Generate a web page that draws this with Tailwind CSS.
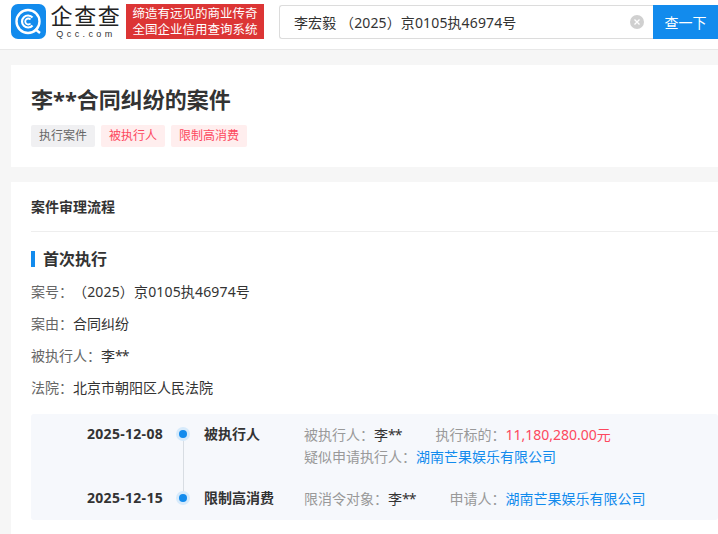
<!DOCTYPE html>
<html lang="zh"><head><meta charset="utf-8"><script src="https://cdn.jsdelivr.net/npm/@tailwindcss/browser@4"></script></head>
<body class="w-[718px] h-[534px] overflow-hidden bg-[#f6f6f6] font-['Noto_Sans','Noto_Sans_CJK_SC',sans-serif] text-[14px] text-[#333]">
<header class="h-[50px] bg-white flex items-start pt-[4px] border-b border-[#e8e8e8]">
  <svg class="ml-[11px] w-[35px] h-[35px] shrink-0" viewBox="0 0 35 35"><rect width="35" height="35" rx="7" fill="#128bed"/><circle cx="17" cy="17.500" r="11.500" fill="none" stroke="#fff" stroke-width="2.400"/><path d="M21.500 13.500a6 6 0 1 0 0 8" fill="none" stroke="#fff" stroke-width="2.200"/><path d="M19.500 15.500a3 3 0 1 0 0 4" fill="none" stroke="#fff" stroke-width="1.800"/><path d="M24 25l5 4" stroke="#fff" stroke-width="2.400"/></svg>
  <div class="ml-[5px] w-[70px] shrink-0 flex flex-col items-center font-['Liberation_Sans','Noto_Sans_CJK_SC',sans-serif]">
    <span class="text-[22px] leading-[25px] tracking-[1.700px] text-[#222] whitespace-nowrap">企查查</span>
    <span class="text-[9px] leading-[10px] tracking-[3.400px] text-[#333] whitespace-nowrap">Qcc.com</span>
  </div>
  <div class="ml-[5px] w-[138px] h-[35px] shrink-0 bg-[#dc3535] text-white text-[12.500px] leading-[16px] flex flex-col justify-center items-center whitespace-nowrap"><span>缔造有远见的商业传奇</span><span>全国企业信用查询系统</span></div>
  <div class="ml-[15px] h-[34px] mt-[1px] flex-1 flex min-w-0">
    <div class="flex-1 bg-white border border-[#dcdcdc] border-r-0 rounded-l-[3px] flex items-center pl-[14px] pr-[9px] text-[14px] text-[#333] whitespace-nowrap"><span class="flex-1 tracking-[0.120px]">李宏毅 （2025）京0105执46974号</span>
      <svg class="w-[14px] h-[14px]" viewBox="0 0 14 14"><circle cx="7" cy="7" r="7" fill="#d0d0d0"/><path d="M4.500 4.500l5 5M9.500 4.500l-5 5" stroke="#fff" stroke-width="1.300"/></svg></div>
    <div class="w-[65px] bg-[#128bed] text-white flex items-center justify-center text-[14px] whitespace-nowrap">查一下</div>
  </div>
</header>
<main class="pl-[11px]">
  <section class="mt-[15px] h-[102px] bg-white pl-[20px] pt-[18px]">
    <h1 class="text-[22px] leading-[32px] font-bold text-[#333]">李**合同纠纷的案件</h1>
    <div class="mt-[10px] flex gap-[6px] text-[12px] leading-[22px]">
      <span class="px-[8px] rounded-[2px] bg-[#f0f0f2] text-[#666]">执行案件</span>
      <span class="px-[8px] rounded-[2px] bg-[#ffeeee] text-[#fd485e]">被执行人</span>
      <span class="px-[8px] rounded-[2px] bg-[#ffeeee] text-[#fd485e]">限制高消费</span>
    </div>
  </section>
  <section class="mt-[15px] h-[352px] bg-white pl-[20px]">
    <h2 class="h-[50px] border-b border-[#eee] flex items-center text-[14px] font-bold text-[#333]">案件审理流程</h2>
    <h3 class="mt-[17px] h-[20px] flex items-center text-[16px] font-bold text-[#333]"><i class="w-[4px] h-[16px] bg-[#128bed] mr-[8px]"></i>首次执行</h3>
    <dl class="mt-[7px] text-[14px] leading-[32px] text-[#333]">
      <div class="flex h-[32px]"><dt class="text-[#666]">案号：</dt><dd class="tracking-[0.160px]">（2025）京0105执46974号</dd></div>
      <div class="flex h-[32px]"><dt class="text-[#666]">案由：</dt><dd>合同纠纷</dd></div>
      <div class="flex h-[32px]"><dt class="text-[#666]">被执行人：</dt><dd>李<span class="tracking-[-1px]">**</span></dd></div>
      <div class="flex h-[32px]"><dt class="text-[#666]">法院：</dt><dd>北京市朝阳区人民法院</dd></div>
    </dl>
    <div class="mt-[10px] h-[106px] bg-[#f6f8fc] rounded-[3px] relative whitespace-nowrap">
      <div class="absolute left-[152px] top-[20px] h-[64px] w-px bg-[#d8dde3]"></div>
      <div class="flex items-start pt-[10px] h-[74px]">
        <div class="w-[132px] text-right text-[14px] leading-[20px] font-bold text-[#333] tracking-[0.300px]">2025-12-08</div>
        <div class="relative w-[41px] flex justify-center pt-[6px] pr-[1px]"><span class="w-[8px] h-[8px] rounded-full bg-[#128bed] ring-[3px] ring-[#d6eafb]"></span></div>
        <div class="w-[100px] font-bold leading-[20px]">被执行人</div>
        <div class="leading-[22px]">
          <div><span class="text-[#999]">被执行人：</span>李<span class="tracking-[-1px]">**</span><span class="ml-[34px] text-[#999]">执行标的：</span><span class="text-[#fd485e]">11,180,280.00元</span></div>
          <div><span class="text-[#999]">疑似申请执行人：</span><span class="text-[#128bed]">湖南芒果娱乐有限公司</span></div>
        </div>
      </div>
      <div class="flex items-start">
        <div class="w-[132px] text-right text-[14px] leading-[20px] font-bold text-[#333] tracking-[0.300px]">2025-12-15</div>
        <div class="relative w-[41px] flex justify-center pt-[6px] pr-[1px]"><span class="w-[8px] h-[8px] rounded-full bg-[#128bed] ring-[3px] ring-[#d6eafb]"></span></div>
        <div class="w-[100px] font-bold leading-[20px]">限制高消费</div>
        <div class="leading-[22px]"><span class="text-[#999]">限消令对象：</span>李<span class="tracking-[-1px]">**</span><span class="ml-[34px] text-[#999]">申请人：</span><span class="text-[#128bed]">湖南芒果娱乐有限公司</span></div>
      </div>
    </div>
  </section>
</main>
</body></html>
